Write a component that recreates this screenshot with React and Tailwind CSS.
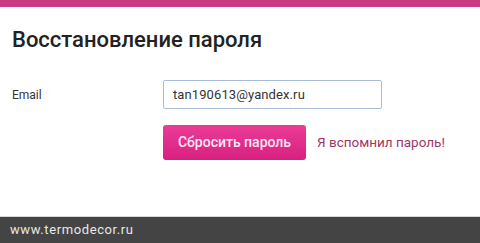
export default function App() {
  return (
    <div className="w-[480px] h-[243px] flex flex-col bg-white overflow-hidden" style={{ fontFamily: 'Roboto, "Noto Sans", sans-serif' }}>
      <div className="h-[7px] bg-[#c93a83]" />
      <h1 className="px-[12px] pt-[19px] text-[22px] leading-[28px] font-medium text-[#222]">Восстановление пароля</h1>
      <div className="mt-[26px] flex flex-col gap-[16px] pl-[12px]">
        <div className="flex items-center">
          <span className="w-[151px] text-[12px] text-[#333]">Email</span>
          <div className="w-[219px] h-[29px] border border-[#a9bddb] rounded-[2px] flex items-center px-[9px] text-[13px] tracking-[0.1px] text-[#333]">
            tan190613@yandex.ru
          </div>
        </div>
        <div className="flex items-center pl-[151px] gap-[11px]">
          <button className="w-[143px] h-[35px] rounded-[3px] bg-gradient-to-b from-[#ea3c96] to-[#d81f80] text-[14px] text-[#fde6f2] font-medium">
            Сбросить пароль
          </button>
          <span className="text-[13.5px] text-[#9e3766]">Я вспомнил пароль!</span>
        </div>
      </div>
      <div className="flex-1" />
      <div className="h-[1px] bg-[#d8d8d8]" />
      <div className="h-[26px] bg-[#444444] flex items-center px-[10px] text-[13px] tracking-[0.6px] text-[#e8e8e8]">
        www.termodecor.ru
      </div>
    </div>
  );
}
